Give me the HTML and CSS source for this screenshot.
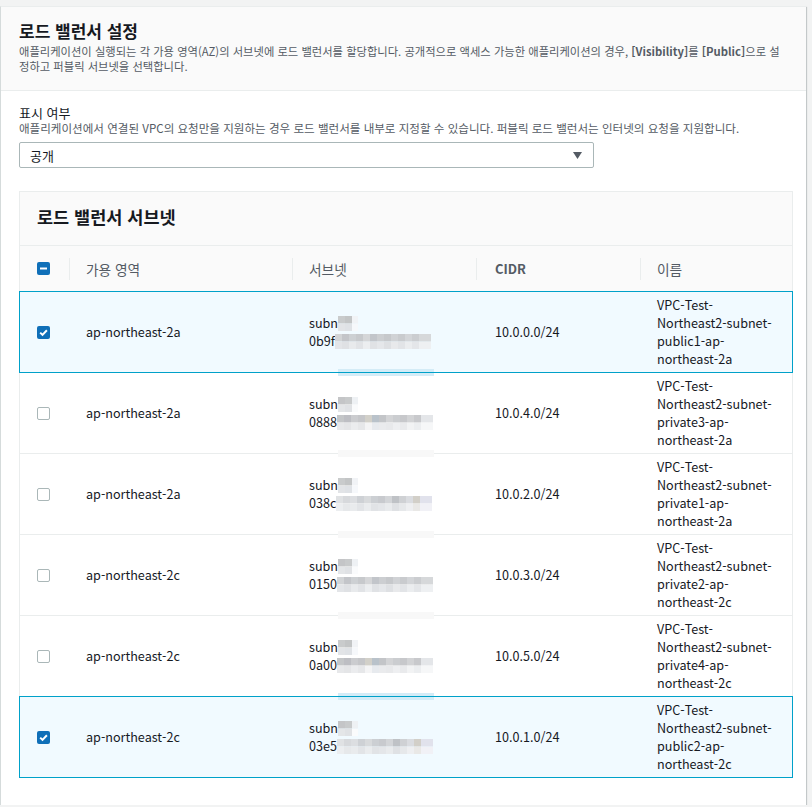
FILE: index.html
```html
<!DOCTYPE html>
<html lang="ko">
<head>
<meta charset="utf-8">
<title>로드 밸런서 설정</title>
<link rel="stylesheet" href="styles.css">
</head>
<body>
<div class="panel">
  <div class="panel-head">
    <h2 class="title">로드 밸런서 설정</h2>
    <p class="desc"><span class="line">애플리케이션이 실행되는 각 가용 영역(AZ)의 서브넷에 로드 밸런서를 할당합니다. 공개적으로 액세스 가능한 애플리케이션의 경우, <b>[Visibility]</b>를 <b>[Public]</b>으로 설</span><span class="line">정하고 퍼블릭 서브넷을 선택합니다.</span></p>
  </div>
  <div class="panel-body">
    <div class="field-label">표시 여부</div>
    <div class="field-desc">애플리케이션에서 연결된 VPC의 요청만을 지원하는 경우 로드 밸런서를 내부로 지정할 수 있습니다. 퍼블릭 로드 밸런서는 인터넷의 요청을 지원합니다.</div>
    <div class="select">
      <span>공개</span>
      <svg class="caret" width="9" height="7" viewBox="0 0 9 7"><path d="M0 0 H9 L4.5 7 Z" fill="#545b64"/></svg>
    </div>

    <div class="table-card">
      <div class="table-title">로드 밸런서 서브넷</div>
      <div class="thead">
        <div class="th th-check">
          <svg width="13" height="13" viewBox="0 0 13 13"><rect width="13" height="13" rx="2" fill="#0f6fb8"/><path d="M3 6.5 H10" stroke="#fff" stroke-width="2"/></svg>
        </div>
        <div class="th">가용 영역</div>
        <div class="th">서브넷</div>
        <div class="th th-bold">CIDR</div>
        <div class="th">이름</div>
      </div>

      <div class="row sel">
        <div class="td td-check"><svg width="13" height="13" viewBox="0 0 13 13"><rect width="13" height="13" rx="2" fill="#0f6fb8"/><path d="M3.2 6.6 L5.5 8.9 L9.9 4.2" stroke="#fff" stroke-width="2" fill="none"/></svg></div>
        <div class="td">ap-northeast-2a</div>
        <div class="td td-subnet"><span>subn<span class="mz mz1"></span></span><span>0b9f<span class="mz mz2"></span></span></div>
        <div class="td td-cidr">10.0.0.0/24</div>
        <div class="td td-name">VPC-Test-Northeast2-subnet-public1-ap-northeast-2a</div>
      </div>

      <div class="row after-sel">
        <div class="td td-check"><span class="cb"></span></div>
        <div class="td">ap-northeast-2a</div>
        <div class="td td-subnet"><span class="strip"></span><span>subn<span class="mz mz1 v2"></span></span><span>0888<span class="mz mz2 v2"></span></span></div>
        <div class="td td-cidr">10.0.4.0/24</div>
        <div class="td td-name">VPC-Test-Northeast2-subnet-private3-ap-northeast-2a</div>
      </div>

      <div class="row">
        <div class="td td-check"><span class="cb"></span></div>
        <div class="td">ap-northeast-2a</div>
        <div class="td td-subnet"><span class="strip"></span><span>subn<span class="mz mz1"></span></span><span>038c<span class="mz mz2 v3"></span></span></div>
        <div class="td td-cidr">10.0.2.0/24</div>
        <div class="td td-name">VPC-Test-Northeast2-subnet-private1-ap-northeast-2a</div>
      </div>

      <div class="row">
        <div class="td td-check"><span class="cb"></span></div>
        <div class="td">ap-northeast-2c</div>
        <div class="td td-subnet"><span class="strip"></span><span>subn<span class="mz mz1 v2"></span></span><span>0150<span class="mz mz2"></span></span></div>
        <div class="td td-cidr">10.0.3.0/24</div>
        <div class="td td-name">VPC-Test-Northeast2-subnet-private2-ap-northeast-2c</div>
      </div>

      <div class="row">
        <div class="td td-check"><span class="cb"></span></div>
        <div class="td">ap-northeast-2c</div>
        <div class="td td-subnet"><span class="strip"></span><span>subn<span class="mz mz1"></span></span><span>0a00<span class="mz mz2 v2"></span></span></div>
        <div class="td td-cidr">10.0.5.0/24</div>
        <div class="td td-name">VPC-Test-Northeast2-subnet-private4-ap-northeast-2c</div>
      </div>

      <div class="row sel">
        <div class="td td-check"><svg width="13" height="13" viewBox="0 0 13 13"><rect width="13" height="13" rx="2" fill="#0f6fb8"/><path d="M3.2 6.6 L5.5 8.9 L9.9 4.2" stroke="#fff" stroke-width="2" fill="none"/></svg></div>
        <div class="td">ap-northeast-2c</div>
        <div class="td td-subnet"><span class="strip blue"></span><span>subn<span class="mz mz1 v2"></span></span><span>03e5<span class="mz mz2 v3"></span></span></div>
        <div class="td td-cidr">10.0.1.0/24</div>
        <div class="td td-name">VPC-Test-Northeast2-subnet-public2-ap-northeast-2c</div>
      </div>
    </div>
  </div>
</div>
</body>
</html>
```

FILE: styles.css
```css
* { box-sizing: border-box; }

body {
  margin: 0;
  padding-top: 6px;
  background: #f2f3f3;
  font-family: "Noto Sans CJK KR", "Noto Sans", sans-serif;
  color: #16191f;
}

.panel {
  width: 806px;
  background: #fff;
  border-top: 1px solid #eaeded;
  border-left: 1px solid #d5dbdb;
  box-shadow: 0 1px 1px 0 rgba(0, 28, 36, 0.3), 1px 1px 1px 0 rgba(0, 28, 36, 0.15);
}

.panel-head {
  background: #fafafa;
  border-bottom: 1px solid #eaeded;
  padding: 13px 12px 16px 18px;
}

.title {
  margin: 0;
  font-size: 17px;
  line-height: 22px;
  font-weight: 700;
}

.desc {
  margin: 2px 0 0;
  font-size: 11.3px;
  line-height: 15px;
  color: #545b64;
}

.desc .line {
  display: block;
  white-space: nowrap;
}

.desc b {
  color: #545b64;
  font-weight: 700;
}

.panel-body {
  padding: 14px 12px 27px 18px;
}

.field-label {
  font-size: 13px;
  line-height: 16px;
}

.field-desc {
  font-size: 11.55px;
  line-height: 15px;
  color: #545b64;
  white-space: nowrap;
}

.select {
  margin-top: 6px;
  width: 575px;
  height: 26px;
  border: 1px solid #aab7b8;
  border-radius: 2px;
  display: flex;
  align-items: center;
  justify-content: space-between;
  padding: 0 11px 0 10px;
  font-size: 13px;
}

.caret { display: block; }

.table-card {
  margin-top: 23px;
  width: 774px;
  border: 1px solid #eaeded;
  background: #fff;
}

.table-title {
  background: #fafafa;
  border-bottom: 1px solid #eaeded;
  padding: 13px 17px 16px;
  font-size: 17.5px;
  line-height: 24px;
  font-weight: 700;
}

.thead,
.row {
  display: grid;
  grid-template-columns: 49px 223px 184px 164px 152px;
  align-items: center;
}

.thead {
  height: 45px;
  background: #fafafa;
}

.th {
  height: 22px;
  line-height: 22px;
  border-left: 1px solid #eaeded;
  padding-left: 16px;
  font-size: 13.7px;
  color: #545b64;
}

.th-check {
  border-left: none;
  padding-left: 17px;
  display: flex;
  align-items: center;
}

.th-check svg { display: block; }

.th-bold { font-weight: 700; padding-left: 18px; font-size: 13px; }

.row {
  position: relative;
  height: 81px;
  border-top: 1px solid #eaeded;
  font-size: 12.6px;
  line-height: 18px;
}

.row.sel { background: #f1faff; }

.row.sel::after {
  content: "";
  position: absolute;
  top: -1px;
  left: -1px;
  right: -1px;
  bottom: -1px;
  border: 1px solid #00a1c9;
  z-index: 2;
  pointer-events: none;
}

.td { padding-left: 17px; }

.td-check {
  display: flex;
  align-items: center;
}

.td-check svg { display: block; }

.cb {
  display: block;
  width: 13px;
  height: 13px;
  border: 1px solid #aab7b8;
  border-radius: 2px;
  background: #fff;
}

.td-subnet {
  position: relative;
  align-self: stretch;
  display: flex;
  flex-direction: column;
  justify-content: center;
}

.td-subnet > span { display: block; white-space: nowrap; }

.td-cidr { padding-left: 19px; }

.td-name { padding-right: 18px; }

.mz {
  display: inline-block;
  vertical-align: middle;
  height: 15px;
  margin-top: -2px;
}

.mz1 {
  width: 20px;
  background:
    linear-gradient(90deg, #c9cbcc 0 7px, #c3c5c6 7px 14px, #f1f3f6 14px 20px) top / 100% 50% no-repeat,
    linear-gradient(90deg, #e2e4e7 0 7px, #dfe2e6 7px 14px, #f6f8fb 14px 20px) bottom / 100% 50% no-repeat;
}

.mz1.v2 {
  background:
    linear-gradient(90deg, #c4c5c7 0 7px, #c8cacb 7px 14px, #eef1f4 14px 20px) top / 100% 50% no-repeat,
    linear-gradient(90deg, #e4e6e8 0 7px, #e0e2e5 7px 14px, #fafbfc 14px 20px) bottom / 100% 50% no-repeat;
}

.mz2 {
  width: 96px;
  background:
    linear-gradient(90deg, #d2d4d6 0 7px, #c3c5c9 7px 14px, #cdd0d3 14px 21px, #c7c9cc 21px 28px, #d5d6d8 28px 35px, #c2c5ca 35px 42px, #ccced1 42px 49px, #c6c8cb 49px 56px, #d0d2d5 56px 63px, #c9cbce 63px 70px, #d3d5d8 70px 77px, #cbcdd0 77px 84px, #d6d8da 84px 96px) top / 100% 50% no-repeat,
    linear-gradient(90deg, #e3e5e8 0 7px, #dfe1e4 7px 14px, #e8eaec 14px 21px, #e1e3e6 21px 28px, #eceef0 28px 35px, #e0e2e5 35px 42px, #e5e7ea 42px 49px, #dee0e3 49px 56px, #e8e9eb 56px 63px, #e2e4e7 63px 70px, #ebedef 70px 77px, #e4e6e9 77px 84px, #eef0f2 84px 96px) bottom / 100% 50% no-repeat;
}

.mz2.v2 {
  background:
    linear-gradient(90deg, #c4c6c8 0 7px, #bdbec3 7px 14px, #cbcccf 14px 21px, #c5c6c9 21px 28px, #d2d0c9 28px 35px, #b9c2ca 35px 42px, #c3c5c8 42px 49px, #d3d4d6 49px 56px, #cbcdd0 56px 63px, #c7c8cb 63px 70px, #d2d3d5 70px 77px, #c8c9cc 77px 84px, #e4e6e9 84px 96px) top / 100% 50% no-repeat,
    linear-gradient(90deg, #e7e8ea 0 7px, #e4e5e7 7px 14px, #ebecee 14px 21px, #e6e7e9 21px 28px, #f4f4f5 28px 35px, #e7eaee 35px 42px, #eaebed 42px 49px, #e8e9eb 49px 56px, #eeeff1 56px 63px, #e9eaec 63px 70px, #f2f3f4 70px 77px, #eceef0 77px 84px, #f6f7f8 84px 96px) bottom / 100% 50% no-repeat;
}

.mz2.v3 {
  background:
    linear-gradient(90deg, #e0e2e4 0 7px, #d7d9dc 7px 14px, #dcdee1 14px 21px, #ced1d5 21px 28px, #d8dadc 28px 35px, #cccfd3 35px 42px, #c8cace 42px 49px, #d3d5d8 49px 56px, #bfc2c6 56px 63px, #cfd1d4 63px 70px, #dadce0 70px 77px, #d2cfc8 77px 84px, #e1e2ec 84px 96px) top / 100% 50% no-repeat,
    linear-gradient(90deg, #eceef0 0 7px, #e6e8ea 7px 14px, #e9ebed 14px 21px, #e2e4e7 21px 28px, #eaecee 28px 35px, #e1e3e6 35px 42px, #e4e6e9 42px 49px, #e9ebed 49px 56px, #dfe1e4 56px 63px, #e6e8ea 63px 70px, #eeeff1 70px 77px, #e9e8e6 77px 84px, #f1f1f6 84px 96px) bottom / 100% 50% no-repeat;
}

.strip {
  position: absolute;
  left: 46px;
  top: -4px;
  width: 96px;
  height: 7px;
  background: #f8f8f8;
}

.after-sel .strip,
.strip.blue {
  background: #d4ecf7;
}
```
